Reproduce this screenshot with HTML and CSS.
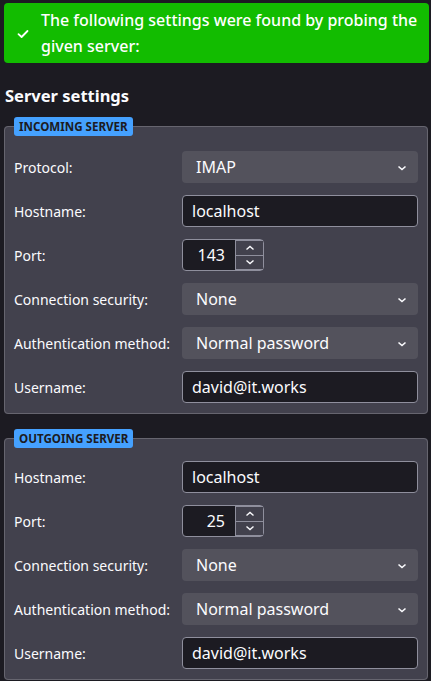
FILE: index.html
```html
<!DOCTYPE html>
<html>
<head>
<meta charset="utf-8">
<link rel="stylesheet" href="styles.css">
</head>
<body>
<div class="banner">
  <svg class="check" width="12" height="10" viewBox="0 0 12 10"><path d="M1.5 5.2 L4.6 8 L10.5 2" fill="none" stroke="#fff" stroke-width="1.8" stroke-linecap="round" stroke-linejoin="round"/></svg>
  <p class="banner-text">The following settings were found by probing the given server:</p>
</div>
<h2 class="title">Server settings</h2>

<fieldset class="group">
  <legend class="badge">INCOMING SERVER</legend>
  <div class="rows">
    <label class="lbl">Protocol:</label>
    <div class="select"><span>IMAP</span><svg class="chev" width="10" height="6" viewBox="0 0 10 6"><path d="M1.5 1.5 L5 4.5 L8.5 1.5" fill="none" stroke="#fbfbfe" stroke-width="1.6"/></svg></div>
    <label class="lbl">Hostname:</label>
    <div class="input">localhost</div>
    <label class="lbl">Port:</label>
    <div class="port"><span class="num">143</span><div class="spin"><div class="sb"><svg width="10" height="6" viewBox="0 0 10 6"><path d="M1.5 4.5 L5 1.5 L8.5 4.5" fill="none" stroke="#fbfbfe" stroke-width="1.4"/></svg></div><div class="sb"><svg width="10" height="6" viewBox="0 0 10 6"><path d="M1.5 1.5 L5 4.5 L8.5 1.5" fill="none" stroke="#fbfbfe" stroke-width="1.4"/></svg></div></div></div>
    <label class="lbl">Connection security:</label>
    <div class="select"><span>None</span><svg class="chev" width="10" height="6" viewBox="0 0 10 6"><path d="M1.5 1.5 L5 4.5 L8.5 1.5" fill="none" stroke="#fbfbfe" stroke-width="1.6"/></svg></div>
    <label class="lbl">Authentication method:</label>
    <div class="select"><span>Normal password</span><svg class="chev" width="10" height="6" viewBox="0 0 10 6"><path d="M1.5 1.5 L5 4.5 L8.5 1.5" fill="none" stroke="#fbfbfe" stroke-width="1.6"/></svg></div>
    <label class="lbl">Username:</label>
    <div class="input">david@it.works</div>
  </div>
</fieldset>

<fieldset class="group group2">
  <legend class="badge">OUTGOING SERVER</legend>
  <div class="rows">
    <label class="lbl">Hostname:</label>
    <div class="input">localhost</div>
    <label class="lbl">Port:</label>
    <div class="port"><span class="num">25</span><div class="spin"><div class="sb"><svg width="10" height="6" viewBox="0 0 10 6"><path d="M1.5 4.5 L5 1.5 L8.5 4.5" fill="none" stroke="#fbfbfe" stroke-width="1.4"/></svg></div><div class="sb"><svg width="10" height="6" viewBox="0 0 10 6"><path d="M1.5 1.5 L5 4.5 L8.5 1.5" fill="none" stroke="#fbfbfe" stroke-width="1.4"/></svg></div></div></div>
    <label class="lbl">Connection security:</label>
    <div class="select"><span>None</span><svg class="chev" width="10" height="6" viewBox="0 0 10 6"><path d="M1.5 1.5 L5 4.5 L8.5 1.5" fill="none" stroke="#fbfbfe" stroke-width="1.6"/></svg></div>
    <label class="lbl">Authentication method:</label>
    <div class="select"><span>Normal password</span><svg class="chev" width="10" height="6" viewBox="0 0 10 6"><path d="M1.5 1.5 L5 4.5 L8.5 1.5" fill="none" stroke="#fbfbfe" stroke-width="1.6"/></svg></div>
    <label class="lbl">Username:</label>
    <div class="input">david@it.works</div>
  </div>
</fieldset>
</body>
</html>
```
FILE: styles.css
```css
* { box-sizing: border-box; }
html, body {
  margin: 0;
  padding: 0;
  background: #1c1b22;
  color: #fbfbfe;
  font-family: "Noto Sans", "Open Sans", sans-serif;
  height: 681px;
  overflow: hidden;
}
.banner {
  margin: 3px 2px 0 4px;
  height: 60px;
  background: #12bc00;
  border-radius: 4px;
  display: flex;
  align-items: center;
  padding: 0 8px 0 13px;
}
.check { flex: none; margin-right: 12px; margin-top: 2px; }
.banner-text {
  margin: 0;
  font-size: 16px;
  line-height: 26px;
  font-weight: 500;
  color: #fff;
}
.title {
  margin: 21px 0 0 5px;
  font-size: 16.5px;
  line-height: 24px;
  font-weight: 700;
}
.group {
  margin: 9px 3px 0 4px;
  padding: 15px 9px 10px 9px;
  border: 1px solid #66656f;
  border-radius: 4px;
  background: #42414d;
  min-width: 0;
}
.group2 { margin-top: 15px; padding-top: 13px; }
.badge {
  padding: 0 5px;
  margin-left: 0;
  height: 19px;
  line-height: 19px;
  background: #45a1ff;
  color: #1c1b22;
  font-size: 11.6px;
  font-weight: 700;
  border-radius: 3px;
}
.rows {
  display: grid;
  grid-template-columns: 168px 1fr;
  grid-auto-rows: 32px;
  row-gap: 12px;
  align-items: center;
}
.lbl { font-size: 14px; }
.select {
  height: 32px;
  background: #53525c;
  border-radius: 4px;
  display: flex;
  align-items: center;
  justify-content: space-between;
  padding: 0 11px 0 14px;
  font-size: 16px;
}
.chev { margin-top: 1px; }
.input {
  height: 32px;
  background: #1c1b22;
  border: 1px solid #8f8f9d;
  border-radius: 4px;
  display: flex;
  align-items: center;
  padding: 0 9px;
  font-size: 16px;
}
.port {
  width: 82px;
  height: 32px;
  background: #1c1b22;
  border: 1px solid #8f8f9d;
  border-radius: 4px;
  display: flex;
  align-items: stretch;
  font-size: 16px;
}
.num {
  flex: 1;
  display: flex;
  align-items: center;
  justify-content: flex-end;
  padding-right: 10px;
}
.spin {
  width: 28px;
  display: flex;
  flex-direction: column;
  border: 1px solid #8f8f9d;
  border-right-width: 0;
  background: #42414d;
}
.sb {
  flex: 1;
  display: flex;
  align-items: center;
  justify-content: center;
}
.sb + .sb { border-top: 1px solid #8f8f9d; }
```
